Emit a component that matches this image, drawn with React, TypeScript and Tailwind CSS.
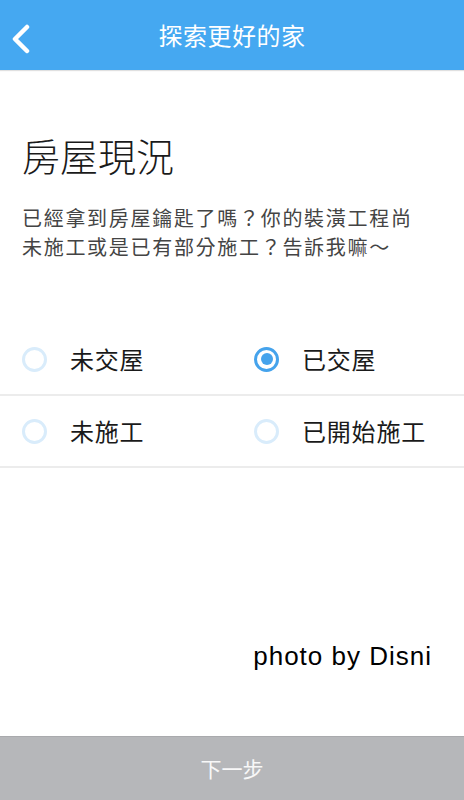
import { useState } from 'react';

const options = [
  ['未交屋', '已交屋'],
  ['未施工', '已開始施工'],
];

function Radio({ checked }: { checked: boolean }) {
  return checked ? (
    <span className="flex h-[25px] w-[25px] items-center justify-center rounded-full border-[3px] border-[#45a3ec]">
      <span className="h-[12px] w-[12px] rounded-full bg-[#45a3ec]" />
    </span>
  ) : (
    <span className="h-[25px] w-[25px] rounded-full border-[3px] border-[#d9ecfb]" />
  );
}

export default function App() {
  const [selected, setSelected] = useState('已交屋');

  return (
    <div className="flex h-[800px] w-[464px] flex-col bg-white font-['Noto_Sans_CJK_TC',sans-serif]">
      <header className="relative flex h-[70px] items-center justify-center bg-[#45a8f1] shadow-[0_1px_1px_rgba(0,0,0,0.12)]">
        <button className="absolute left-[6px] top-[20px] p-1">
          <svg width="22" height="30" viewBox="0 0 22 30" fill="none">
            <path d="M17 3 L5 15 L17 27" stroke="white" strokeWidth="4.5" strokeLinecap="round" strokeLinejoin="round" />
          </svg>
        </button>
        <h1 className="text-[24px] leading-none tracking-[0.5px] text-white">探索更好的家</h1>
      </header>

      <main className="flex flex-1 flex-col">
        <section className="px-[22px] pt-[66px]">
          <h2 className="text-[38px] font-light leading-none text-[#1a1a1a]">房屋現況</h2>
          <p className="mt-[29px] text-[20px] leading-[29px] tracking-[1.7px] text-[#444]">
            已經拿到房屋鑰匙了嗎？你的裝潢工程尚
            <br />
            未施工或是已有部分施工？告訴我嘛～
          </p>
        </section>

        <div className="mt-[63px]">
          {options.map((row) => (
            <div key={row[0]} className="grid h-[72px] grid-cols-2 border-b-2 border-[#ececec]">
              {row.map((label) => (
                <button
                  key={label}
                  onClick={() => setSelected(label)}
                  className="flex items-center gap-[23px] pl-[22px] text-left"
                >
                  <Radio checked={selected === label} />
                  <span className="text-[24px] leading-none tracking-[0.8px] text-[#1a1a1a]">{label}</span>
                </button>
              ))}
            </div>
          ))}
        </div>

        <div className="flex flex-1 items-end justify-end pb-[60px] pr-[32px]">
          <span className="font-['Liberation_Sans',sans-serif] text-[26px] tracking-[1px] text-black [text-shadow:1px_1px_0_#fff,-1px_-1px_0_#fff]">
            photo by Disni
          </span>
        </div>
      </main>

      <footer className="flex h-[64px] items-center justify-center border-t border-[#a9aaad] bg-[#b6b7ba]">
        <span className="text-[21px] text-white/90">下一步</span>
      </footer>
    </div>
  );
}
